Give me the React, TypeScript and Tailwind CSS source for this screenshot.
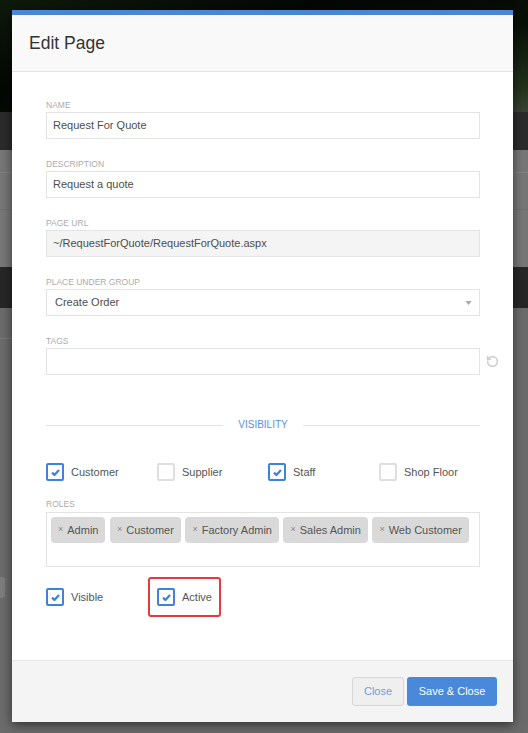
import { RotateCcw } from "lucide-react";

const ROLES = ["Admin", "Customer", "Factory Admin", "Sales Admin", "Web Customer"];

const VISIBILITY = [
  { label: "Customer", checked: true },
  { label: "Supplier", checked: false },
  { label: "Staff", checked: true },
  { label: "Shop Floor", checked: false },
];

function Check({ checked }: { checked: boolean }) {
  return (
    <span
      className={`flex h-[18px] w-[18px] shrink-0 items-center justify-center rounded-[2px] border-2 bg-white ${
        checked ? "border-[#3f82dc]" : "border-[#dedede]"
      }`}
    >
      {checked && (
        <svg viewBox="0 0 10 8" className="h-[7px] w-[9px]">
          <path d="M1 4.2 L3.8 6.8 L9 1.2" fill="none" stroke="#3f82dc" strokeWidth="2.6" />
        </svg>
      )}
    </span>
  );
}

function CheckItem({ label, checked }: { label: string; checked: boolean }) {
  return (
    <label className="flex items-center gap-[7px] text-[11px] text-[#555]">
      <Check checked={checked} />
      {label}
    </label>
  );
}

function Field({ label, children }: { label: string; children: React.ReactNode }) {
  return (
    <div className="flex flex-col gap-[2px]">
      <span className="text-[8.5px] uppercase leading-[10px] text-[#ababab]">{label}</span>
      {children}
    </div>
  );
}

function TextBox({ value, disabled }: { value: string; disabled?: boolean }) {
  return (
    <div
      className={`flex h-[27px] items-center border border-[#e3e3e3] px-[6px] text-[11px] text-[#4d4d4d] ${
        disabled ? "bg-[#f4f4f4]" : "bg-white"
      }`}
    >
      {value}
    </div>
  );
}

export default function App() {
  return (
    <div className="relative h-[733px] w-full overflow-hidden bg-[#6b6b6b] font-['Liberation_Sans',Arial,sans-serif]">
      {/* dimmed page behind */}
      <div className="flex flex-col">
        <div className="h-[112px] bg-[linear-gradient(165deg,#0e1a0b_0%,#040704_35%,#081006_65%,#22331b_90%,#3a4434_100%)]" />
        <div className="h-[38px] bg-[#2b2b2b]" />
        <div className="flex h-[117px] flex-col bg-[#777]">
          <div className="h-[22px]" />
          <div className="h-px bg-[#848484]" />
          <div className="h-[36px]" />
          <div className="h-px bg-[#707070]" />
        </div>
        <div className="h-[41px] bg-[#272727]" />
        <div className="flex flex-col">
          <div className="h-[30px]" />
          <div className="h-px w-[12px] bg-[#7a7a7a]" />
          <div className="h-[238px]" />
          <div className="h-[21px] w-[5px] rounded-r-[3px] bg-[#7d7d7d]" />
        </div>
      </div>

      {/* modal */}
      <div className="absolute left-[12px] top-[10px] flex h-[712px] w-[501px] flex-col border-t-[5px] border-[#4a86d8] bg-white shadow-[0_3px_10px_rgba(0,0,0,0.55)]">
        <div className="flex h-[57px] items-center border-b border-[#e4e4e4] bg-[#f9f9f9] pl-[17px]">
          <h1 className="text-[17.5px] text-[#333]">Edit Page</h1>
        </div>

        <div className="flex flex-1 flex-col pl-[34px] pr-[33px] pt-[28px]">
          <div className="flex flex-col gap-[20px]">
            <Field label="Name">
              <TextBox value="Request For Quote" />
            </Field>
            <Field label="Description">
              <TextBox value="Request a quote" />
            </Field>
            <Field label="Page URL">
              <TextBox value="~/RequestForQuote/RequestForQuote.aspx" disabled />
            </Field>
            <Field label="Place under group">
              <div className="flex h-[27px] items-center justify-between border border-[#e3e3e3] bg-white pl-[8px] pr-[7px] text-[11px] text-[#4d4d4d]">
                <span>Create Order</span>
                <svg viewBox="0 0 8 5" className="h-[4px] w-[7px]">
                  <path d="M0 0 L8 0 L4 5 Z" fill="#aaa" />
                </svg>
              </div>
            </Field>
            <Field label="Tags">
              <div className="relative">
                <div className="h-[27px] border border-[#e3e3e3] bg-white" />
                <RotateCcw
                  className="absolute right-[-19px] top-[7px] h-[13px] w-[13px] text-[#cfcfcf]"
                  strokeWidth={3}
                />
              </div>
            </Field>
          </div>

          <div className="mt-[45px] flex h-[10px] items-center gap-[15px]">
            <div className="h-px flex-1 bg-[#e2e2e2]" />
            <span className="text-[10px] leading-[10px] text-[#5b8ee6]">VISIBILITY</span>
            <div className="h-px flex-1 bg-[#e2e2e2]" />
          </div>

          <div className="mt-[33px] grid h-[18px] grid-cols-[111px_111px_111px_111px]">
            {VISIBILITY.map((v) => (
              <CheckItem key={v.label} label={v.label} checked={v.checked} />
            ))}
          </div>

          <div className="mt-[18px] flex flex-col gap-[3px]">
            <span className="text-[8.5px] uppercase leading-[10px] text-[#ababab]">Roles</span>
            <div className="flex h-[55px] flex-wrap content-start gap-[4.5px] border border-[#e3e3e3] bg-white p-[4px]">
              {ROLES.map((r) => (
                <span
                  key={r}
                  className="flex h-[26px] items-center gap-[4px] rounded-[4px] bg-[#d9d9d9] pl-[7px] pr-[7px] text-[11px] text-[#555]"
                >
                  <span className="text-[9px] text-[#888]">×</span>
                  {r}
                </span>
              ))}
            </div>
          </div>

          <div className="mt-[10px] flex h-[40px] items-center">
            <div className="w-[111px]">
              <CheckItem label="Visible" checked />
            </div>
            <div className="-ml-[9px] flex h-[40px] items-center rounded-[3px] border-2 border-[#e8393a] pl-[7px] pr-[7px]">
              <CheckItem label="Active" checked />
            </div>
          </div>
        </div>

        <div className="flex h-[62px] items-center justify-end gap-[3px] border-t border-[#e6e6e6] bg-[#f4f4f4] pr-[16px]">
          <button className="h-[29px] w-[52px] rounded-[3px] border border-[#d6d6d6] bg-[#efefef] text-[11px] text-[#6d9de0]">
            Close
          </button>
          <button className="h-[29px] w-[90px] rounded-[3px] bg-[#4a88da] text-[11px] text-white">
            Save &amp; Close
          </button>
        </div>
      </div>
    </div>
  );
}
